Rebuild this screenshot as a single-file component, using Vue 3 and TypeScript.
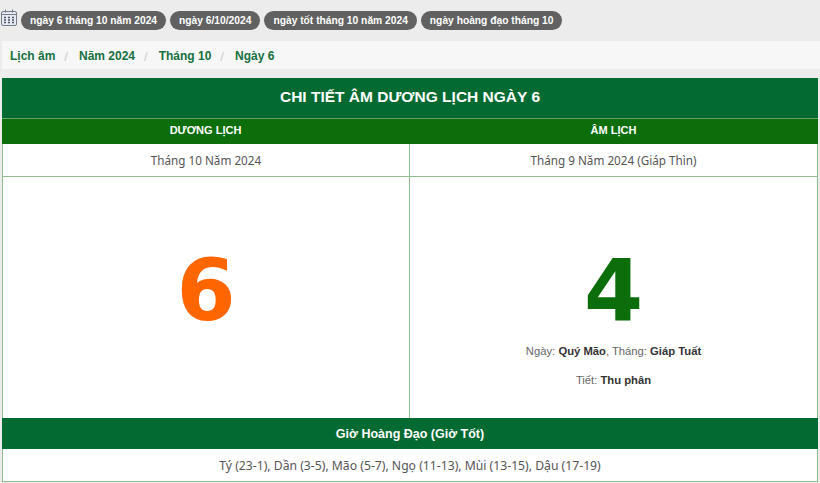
<script setup lang="ts">
const tags: string[] = [
  'ngày 6 tháng 10 năm 2024',
  'ngày 6/10/2024',
  'ngày tốt tháng 10 năm 2024',
  'ngày hoàng đạo tháng 10',
]
const crumbs: string[] = ['Lịch âm', 'Năm 2024', 'Tháng 10', 'Ngày 6']
</script>

<template>
  <div class="page">
    <div class="tags">
      <svg class="cal" width="16" height="17" viewBox="0 0 16 17" fill="none">
        <rect x="0.500" y="2.500" width="15" height="14" rx="1.500" fill="#e6eaf2" stroke="#767b8a" />
        <path d="M1 5.500h14" stroke="#767b8a" />
        <path d="M4.500 0.500v3M11.500 0.500v3" stroke="#767b8a" />
        <path d="M3 8.500h2M7 8.500h2M11 8.500h2M3 11h2M7 11h2M11 11h2M3 13.500h2M7 13.500h2M11 13.500h2" stroke="#4f5462" stroke-width="1.500" />
      </svg>
      <span v-for="tag in tags" :key="tag" class="tag">{{ tag }}</span>
    </div>

    <div class="crumbs">
      <template v-for="(crumb, i) in crumbs" :key="crumb">
        <span v-if="i > 0" class="sep">/</span>
        <a class="crumb">{{ crumb }}</a>
      </template>
    </div>

    <div class="calendar">
      <div class="title">CHI TIẾT ÂM DƯƠNG LỊCH NGÀY 6</div>
      <div class="cols heads">
        <div class="head">DƯƠNG LỊCH</div>
        <div class="head">ÂM LỊCH</div>
      </div>
      <div class="cols months">
        <div class="month">Tháng 10 Năm 2024</div>
        <div class="month">Tháng 9 Năm 2024 (Giáp Thìn)</div>
      </div>
      <div class="cols days">
        <div class="day">
          <div class="num solar">6</div>
        </div>
        <div class="day">
          <div class="num lunar">4</div>
          <p class="info">Ngày: <b>Quý Mão</b>, Tháng: <b>Giáp Tuất</b></p>
          <p class="info">Tiết: <b>Thu phân</b></p>
        </div>
      </div>
      <div class="hours-title">Giờ Hoàng Đạo (Giờ Tốt)</div>
      <div class="hours">Tý (23-1), Dần (3-5), Mão (5-7), Ngọ (11-13), Mùi (13-15), Dậu (17-19)</div>
    </div>
  </div>
</template>

<style>
html,
body {
  margin: 0;
  background: #ececec;
}
</style>

<style scoped>
.page {
  height: 483px;
  overflow: hidden;
  background: #ececec;
  font-family: "Liberation Sans", Arial, sans-serif;
}

.tags {
  display: flex;
  align-items: flex-start;
  gap: 4px;
  height: 41px;
  box-sizing: border-box;
  padding: 11px 0 0 1px;
}

.cal {
  margin-top: -2px;
}

.tag {
  height: 19px;
  padding: 0 9px;
  border-radius: 10px;
  background: #616161;
  color: #fff;
  font-size: 10.25px;
  font-weight: 700;
  line-height: 19px;
  white-space: nowrap;
}

.crumbs {
  display: flex;
  align-items: center;
  height: 28px;
  margin: 0 0 9px 2px;
  padding: 2px 0 0 8px;
  box-sizing: border-box;
  background: #f7f7f7;
  font-size: 12px;
  font-weight: 700;
}

.crumb {
  color: #167040;
}

.sep {
  padding: 0 11px 0 9px;
  color: #ccc;
  font-size: 13px;
  font-weight: 400;
}

.calendar {
  width: 816px;
  margin-left: 2px;
  box-sizing: border-box;
  border: 1px solid #8fbf8f;
  border-top: 0;
  background: #fff;
}

.title {
  height: 40px;
  margin: 0 -1px;
  background: #036a32;
  color: #fff;
  font-size: 15.5px;
  font-weight: 700;
  line-height: 38px;
  text-align: center;
}

.cols {
  display: grid;
  grid-template-columns: 406px 1fr;
}

.heads {
  margin: 0 -1px;
  border-top: 1px solid #6b9a6b;
  background: #0b6e0b;
  grid-template-columns: 407px 1fr;
}

.head {
  height: 25px;
  color: #fff;
  font-size: 11px;
  font-weight: 700;
  line-height: 23px;
  text-align: center;
}

.month {
  height: 32px;
  color: #555;
  font-family: "Noto Sans", sans-serif;
  font-size: 11.7px;
  line-height: 33px;
  text-align: center;
}

.month + .month,
.day + .day {
  border-left: 1px solid #8fbf8f;
}

.months {
  border-bottom: 1px solid #8fbf8f;
}

.day {
  display: flex;
  flex-direction: column;
  align-items: center;
  height: 241px;
}

.num {
  margin-top: 61px;
  margin-bottom: 1px;
  font-family: "DejaVu Sans", sans-serif;
  font-size: 85px;
  font-weight: 700;
  line-height: 106px;
}

.solar {
  color: #ff6600;
}

.lunar {
  color: #0b6e0b;
}

.info {
  margin: 0 0 16px;
  color: #666;
  font-size: 11.25px;
  line-height: 13px;
}

.info b {
  color: #333;
}

.hours-title {
  height: 31px;
  margin: 0 -1px;
  background: #036a32;
  color: #fff;
  font-size: 12.5px;
  font-weight: 700;
  line-height: 33px;
  text-align: center;
}

.hours {
  height: 32px;
  color: #555;
  font-family: "Noto Sans", sans-serif;
  font-size: 12.2px;
  line-height: 33px;
  text-align: center;
}
</style>
